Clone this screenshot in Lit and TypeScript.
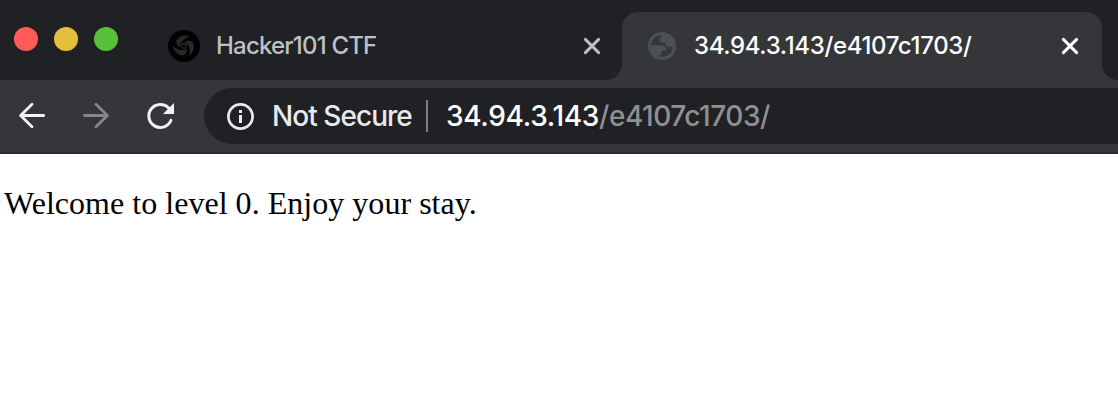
import { LitElement, html, css, svg } from "lit";
import { customElement } from "lit/decorators.js";

const closeIcon = svg`<path d="M-6.6 -6.6 L6.6 6.6 M6.6 -6.6 L-6.6 6.6" fill="none" stroke="currentColor" stroke-width="2.9" stroke-linecap="round"/>`;

@customElement("app-root")
export class AppRoot extends LitElement {
  static styles = css`
    :host {
      display: block;
      width: 1118px;
      height: 420px;
      overflow: hidden;
      background: #fff;
      font-family: Inter, "Liberation Sans", sans-serif;
      font-weight: 450;
    }
    svg { display: block; flex: none; }
    .strip {
      display: flex;
      box-sizing: border-box;
      height: 80px;
      background: #202124;
    }
    .lights { display: flex; gap: 16px; padding: 27px 50px 0 14px; }
    .light { width: 24px; height: 24px; border-radius: 50%; }
    .red { background: #ff5c58; }
    .yellow { background: #e5bf3c; }
    .green { background: #57c038; }
    .tab {
      display: flex;
      align-items: center;
      box-sizing: border-box;
      height: 68px;
      margin-top: 12px;
    }
    .idle { width: 438px; color: #bdc1c6; }
    .active { width: 480px; padding-left: 24px; background: #35363a; color: #fff; border-radius: 16px 16px 0 0; }
    .label { flex: 1; font-size: 24px; line-height: 30px; white-space: nowrap; }
    .idle .label { margin-left: 16px; letter-spacing: -0.8px; }
    .active .label { margin-left: 16px; letter-spacing: -0.35px; }
    .idle .close { margin-right: 4px; }
    .active .close { margin-right: 22px; }
    .flare { width: 16px; height: 80px; }
    .lead { background: radial-gradient(circle at 0 64px, transparent 15.6px, #35363a 16.4px) 0 0 / 16px 80px; clip-path: inset(64px 0 0 0); }
    .tail { background: radial-gradient(circle at 16px 64px, transparent 15.6px, #35363a 16.4px) 0 0 / 16px 80px; clip-path: inset(64px 0 0 0); }
    .bar {
      display: flex;
      box-sizing: border-box;
      height: 74px;
      padding: 8px 0 0 16px;
      background: #35363a;
      border-bottom: 2px solid #28292c;
    }
    .nav { display: flex; gap: 32px; align-items: center; height: 56px; width: 188px; color: #f1f3f4; }
    .omni {
      display: flex;
      align-items: center;
      flex: 1;
      height: 56px;
      padding-left: 20px;
      border-radius: 28px 0 0 28px;
      background: #202124;
      font-size: 28px;
      line-height: 34px;
      white-space: nowrap;
      color: #e8eaed;
    }
    .secure { width: 154px; margin-left: 16px; box-sizing: border-box; letter-spacing: -0.95px; }
    .rule { width: 2px; height: 32px; background: #7d7e80; margin-right: 18px; }
    .host { color: #fff; letter-spacing: -0.32px; }
    .path { color: #8f9092; letter-spacing: -0.48px; }
    .page { margin: 0; padding: 31px 4px 0; font: 32px/36px "Liberation Serif", serif; letter-spacing: 0.03px; color: #000; white-space: nowrap; }
  `;

  render() {
    return html`
      <div class="strip">
        <div class="lights">
          <div class="light red"></div><div class="light yellow"></div><div class="light green"></div>
        </div>
        <div class="tab idle">
          <svg width="32" height="32" viewBox="-16 -16 32 32">
            <circle r="16" fill="#000"/>
            <g fill="#27282b">
              ${[0, 120, 240].map(a => svg`<path transform="rotate(${a})" d="M5.8 -9.8C1 -11.4 -5.4 -10 -8 -5C-7.7 -2 -5.8 .6 -4 1.8C-4.6 -2 -2 -6.4 5.8 -9.8Z"/>`)}
              <path d="M-3 -1.8Q0 -4 3 -1.8Q3.4 1.6 0 3.5Q-3.4 1.6 -3 -1.8Z"/>
            </g>
            <circle r="1.6" fill="#000"/>
          </svg>
          <span class="label">Hacker101 CTF</span>
          <svg class="close" width="20" height="20" viewBox="-10 -10 20 20">${closeIcon}</svg>
        </div>
        <div class="flare lead"></div>
        <div class="tab active">
          <svg width="32" height="32" viewBox="-16 -16 32 32">
            <circle r="14" fill="#4d5156"/>
            <path fill="#35363a" d="M-.6 -10.9C-6 -10.7 -10 -6.8 -10.9 -.8H-2C2.2 -.8 4.3 1.2 4.3 4.8H1.2C-.4 4.8 -1 5.6 -1 6.6V9.4H-5.2V9.6C2 13 10.6 9 11 .8H6.6C4.4 .8 3.2 -.6 3.2 -2.6V-3.6H.4C-1.8 -3.6 -2.4 -5 -2.4 -6.3C-2.4 -7.8 -1.7 -8.6 -.6 -8.6Z"/>
          </svg>
          <span class="label">34.94.3.143/e4107c1703/</span>
          <svg class="close" width="20" height="20" viewBox="-10 -10 20 20">${closeIcon}</svg>
        </div>
        <div class="flare tail"></div>
      </div>
      <div class="bar">
        <div class="nav">
          <svg width="32" height="32" viewBox="0 0 32 32" fill="none" stroke="currentColor" stroke-width="2.8" stroke-linecap="round" stroke-linejoin="round"><path d="M27.7 15.5H5M16 4.3L4.6 15.5L16 26.7"/></svg>
          <svg width="32" height="32" viewBox="0 0 32 32" fill="none" stroke="#858688" stroke-width="2.8" stroke-linecap="round" stroke-linejoin="round"><path d="M4.3 15.5H27M16 4.3L27.4 15.5L16 26.7"/></svg>
          <svg width="32" height="32" viewBox="0 0 32 32"><path d="M24.8 8.2A11.5 11.5 0 1 0 27 20.3" fill="none" stroke="currentColor" stroke-width="3" stroke-linecap="round"/><path d="M30 3V14H19Z" fill="currentColor"/></svg>
        </div>
        <div class="omni">
          <svg width="32" height="32" viewBox="0 0 32 32"><circle cx="16.5" cy="16.5" r="12.1" fill="none" stroke="currentColor" stroke-width="2.7"/><path d="M15 10H18V13H15ZM15 15H18V23H15Z" fill="currentColor"/></svg>
          <span class="secure">Not Secure</span>
          <div class="rule"></div>
          <span class="host">34.94.3.143</span><span class="path">/e4107c1703/</span>
        </div>
      </div>
      <p class="page">Welcome to level 0. Enjoy your stay.</p>
    `;
  }
}
